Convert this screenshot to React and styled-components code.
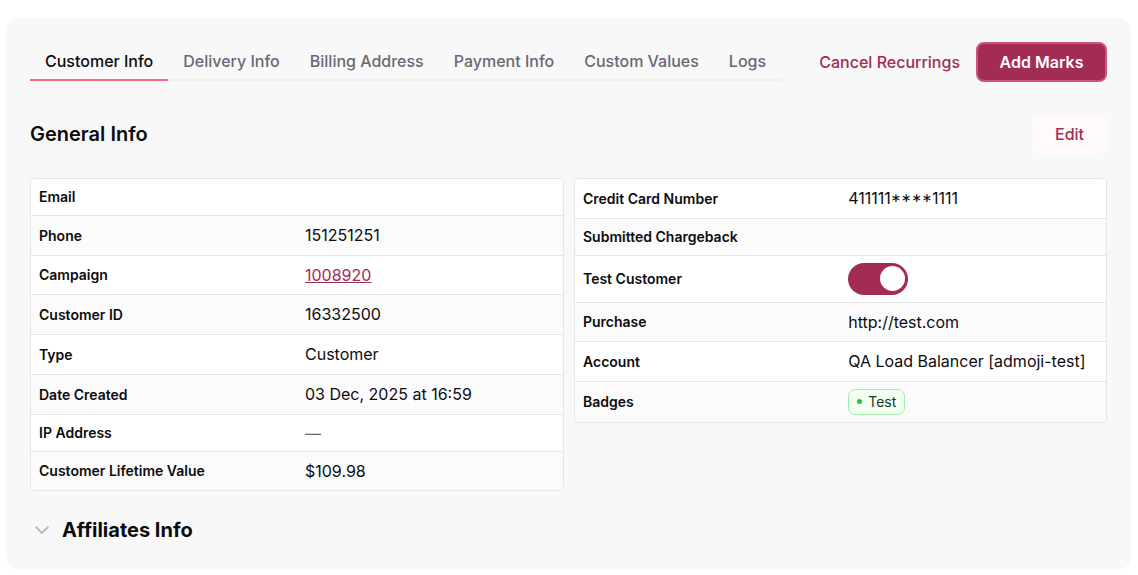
import styled, { createGlobalStyle } from "styled-components";

const GlobalStyle = createGlobalStyle`
  html, body {
    margin: 0;
    padding: 0;
    background: #fff;
    font-family: Inter, "Liberation Sans", sans-serif;
    color: #0c0c0f;
  }
`;

const Page = styled.div`
  padding: 18px 7px 5px 6px;
`;

const Panel = styled.div`
  background: #f8f8f8;
  border-radius: 14px;
  height: 552px;
  box-sizing: border-box;
  padding: 24px 24px 0;
`;

const TopBar = styled.div`
  display: flex;
  align-items: flex-start;
  justify-content: space-between;
`;

const Tabs = styled.div`
  display: flex;
  width: 753px;
  height: 39px;
  box-sizing: border-box;
  border-bottom: 2px solid #f1f1f2;
`;

const Tab = styled.div`
  padding: 10px 15px 0;
  height: 39px;
  box-sizing: border-box;
  font-size: 16px;
  line-height: 19px;
  font-weight: 500;
  color: ${(p) => (p.$active ? "#0c0c0f" : "#6b6776")};
  border-bottom: 2px solid ${(p) => (p.$active ? "#ff6b81" : "transparent")};
`;

const Actions = styled.div`
  display: flex;
  align-items: center;
  gap: 16px;
`;

const CancelLink = styled.span`
  font-size: 16px;
  font-weight: 500;
  color: #a22c53;
`;

const AddButton = styled.div`
  width: 131px;
  height: 40px;
  box-sizing: border-box;
  display: flex;
  align-items: center;
  justify-content: center;
  background: #a22c53;
  border: 2px solid #cf5378;
  border-radius: 8px;
  color: #fff;
  font-size: 16px;
  font-weight: 600;
`;

const SectionHead = styled.div`
  display: flex;
  align-items: center;
  justify-content: space-between;
  margin-top: 32px;
  height: 40px;
`;

const Title = styled.h2`
  margin: 0;
  font-size: 20px;
  font-weight: 600;
`;

const EditButton = styled.div`
  width: 75px;
  height: 40px;
  display: flex;
  align-items: center;
  justify-content: center;
  background: #fff9fa;
  border-radius: 8px;
  color: #a22c53;
  font-size: 16px;
  font-weight: 500;
`;

const Columns = styled.div`
  display: grid;
  grid-template-columns: 534px 533px;
  gap: 10px;
  align-items: start;
  margin-top: 24px;
`;

const Table = styled.div`
  border: 1px solid #e6e6e8;
  border-radius: 4px;
  overflow: hidden;
`;

const Row = styled.div`
  display: grid;
  grid-template-columns: ${(p) => p.$labelWidth}px 1fr;
  align-items: center;
  height: ${(p) => p.$height}px;
  box-sizing: border-box;
  padding: 0 8px 1px;
  background: ${(p) => (p.$odd ? "#fff" : "#fbfbfb")};
  &:not(:last-child) {
    border-bottom: 1px solid #e6e6e8;
  }
`;

const Label = styled.div`
  font-size: 14px;
  font-weight: 600;
`;

const Value = styled.div`
  font-size: 16px;
  line-height: 20px;
`;

const CampaignLink = styled.span`
  color: #a22c53;
  text-decoration: underline;
`;

const Dash = styled.span`
  color: #6b6776;
`;

const CardMask = styled.span`
  font-feature-settings: "case";
`;

const Toggle = styled.div`
  width: 60px;
  height: 32px;
  border-radius: 16px;
  background: #a22c53;
  display: flex;
  align-items: center;
  justify-content: flex-end;
  padding-right: 3px;
  box-sizing: border-box;
`;

const Knob = styled.div`
  width: 25px;
  height: 25px;
  border-radius: 50%;
  background: #fff;
`;

const Badge = styled.div`
  display: inline-flex;
  align-items: center;
  gap: 6px;
  height: 26px;
  box-sizing: border-box;
  padding: 0 8px;
  background: #f0fff0;
  border: 1px solid #a9eaae;
  border-radius: 7px;
  font-size: 14px;
  color: #1a3a1f;
`;

const Dot = styled.span`
  width: 5px;
  height: 5px;
  border-radius: 50%;
  background: #2bbf3f;
`;

const Collapse = styled.div`
  display: flex;
  align-items: center;
  gap: 13px;
  margin-top: 23px;
  padding-left: 5px;
`;

const CollapseTitle = styled.h2`
  margin: 0;
  font-size: 20px;
  line-height: 32px;
  font-weight: 700;
`;

const leftRows = [
  ["Email", "", 37],
  ["Phone", "151251251", 40],
  ["Campaign", <CampaignLink>1008920</CampaignLink>, 39],
  ["Customer ID", "16332500", 40],
  ["Type", "Customer", 40],
  ["Date Created", "03 Dec, 2025 at 16:59", 40],
  ["IP Address", <Dash>—</Dash>, 37],
  ["Customer Lifetime Value", "$109.98", 38],
];

const rightRows = [
  ["Credit Card Number", <>411111<CardMask>****</CardMask>1111</>, 40],
  ["Submitted Chargeback", "", 37],
  ["Test Customer", <Toggle><Knob /></Toggle>, 47],
  ["Purchase", "http://test.com", 39],
  ["Account", "QA Load Balancer [admoji-test]", 40],
  ["Badges", <Badge><Dot />Test</Badge>, 40],
];

function InfoTable({ rows, labelWidth }) {
  return (
    <Table>
      {rows.map(([label, value, height], i) => (
        <Row key={label} $odd={i % 2 === 0} $height={height} $labelWidth={labelWidth}>
          <Label>{label}</Label>
          <Value>{value}</Value>
        </Row>
      ))}
    </Table>
  );
}

export default function App() {
  return (
    <Page>
      <GlobalStyle />
      <Panel>
        <TopBar>
          <Tabs>
            <Tab $active>Customer Info</Tab>
            <Tab>Delivery Info</Tab>
            <Tab>Billing Address</Tab>
            <Tab>Payment Info</Tab>
            <Tab>Custom Values</Tab>
            <Tab>Logs</Tab>
          </Tabs>
          <Actions>
            <CancelLink>Cancel Recurrings</CancelLink>
            <AddButton>Add Marks</AddButton>
          </Actions>
        </TopBar>
        <SectionHead>
          <Title>General Info</Title>
          <EditButton>Edit</EditButton>
        </SectionHead>
        <Columns>
          <InfoTable rows={leftRows} labelWidth={266} />
          <InfoTable rows={rightRows} labelWidth={265.2} />
        </Columns>
        <Collapse>
          <svg width="14" height="8" viewBox="0 0 14 8" fill="none" stroke="#b9b9c0" strokeWidth="2">
            <path d="M.7.7 7 7 13.3.7" />
          </svg>
          <CollapseTitle>Affiliates Info</CollapseTitle>
        </Collapse>
      </Panel>
    </Page>
  );
}
